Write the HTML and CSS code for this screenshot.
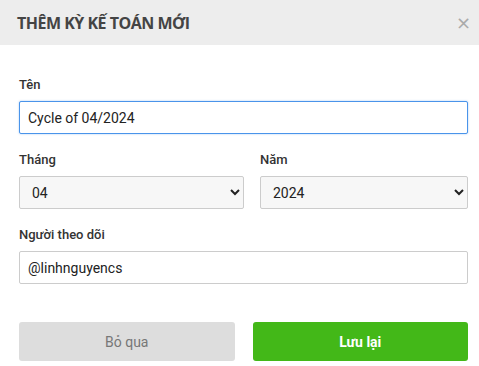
FILE: index.html
```html
<!doctype html>
<html>
<head>
<meta charset="utf-8">
<meta name="viewport" content="width=device-width, initial-scale=1.0">
<link rel="stylesheet" href="styles.css">
<title>Thêm kỳ kế toán mới</title>
</head>
<body>
<div class="modal">
  <div class="modal-header">
    <h1 class="modal-title">THÊM KỲ KẾ TOÁN MỚI</h1>
    <span class="modal-close">&times;</span>
  </div>

  <form class="modal-body">
    <div class="field">
      <label class="field-label">Tên</label>
      <input class="field-input is-focus" type="text" value="Cycle of 04/2024">
    </div>

    <div class="field-row">
      <div class="field">
        <label class="field-label">Tháng</label>
        <select class="field-select">
          <option>04</option>
        </select>
      </div>
      <div class="field">
        <label class="field-label">Năm</label>
        <select class="field-select">
          <option>2024</option>
        </select>
      </div>
    </div>

    <div class="field">
      <label class="field-label">Người theo dõi</label>
      <input class="field-input" type="text" value="@linhnguyencs">
    </div>

    <div class="actions">
      <button type="button" class="btn btn-cancel">Bỏ qua</button>
      <button type="button" class="btn btn-save">Lưu lại</button>
    </div>
  </form>
</div>
</body>
</html>
```

FILE: styles.css
```css
html,
body {
    margin: 0;
    padding: 0;
    background: #fff;
}
body {
    font-family: Roboto, "Liberation Sans", Arial, sans-serif;
    color: #333;
}
.modal {
    width: 479px;
}
.modal-header {
    height: 45px;
    background: #ededed;
    display: flex;
    align-items: center;
    justify-content: space-between;
    padding: 0 8px 0 17px;
    box-sizing: border-box;
}
.modal-title {
    margin: 0;
    font-family: "Open Sans", "Liberation Sans", sans-serif;
    font-size: 16px;
    font-weight: 700;
    color: #444;
    letter-spacing: -0.5px;
}
.modal-close {
    font-family: "DejaVu Sans", sans-serif;
    font-size: 18px;
    color: #aaa;
    line-height: 1;
}
.modal-body {
    padding: 30px 11px 0 19px;
}
.field {
    display: flex;
    flex-direction: column;
    min-width: 0;
    margin-bottom: 16px;
}
.field-label {
    font-size: 13px;
    font-weight: 500;
    line-height: 20px;
    color: #333;
    margin-bottom: 6px;
}
.field-input,
.field-select {
    width: 100%;
    height: 33px;
    box-sizing: border-box;
    border: 1px solid #ccc;
    border-radius: 2px;
    font-family: Roboto, "Liberation Sans", Arial, sans-serif;
    font-size: 14px;
    color: #222;
    padding: 0 8px;
    outline: none;
}
.field-input.is-focus {
    border-color: #4a94ea;
    box-shadow: 0 0 2px rgba(74, 148, 234, 0.5);
}
.field-select {
    background: #f7f7f7;
}
.field-row {
    display: grid;
    grid-template-columns: 225px 1fr;
    column-gap: 16px;
}
.actions {
    display: flex;
    gap: 18px;
    margin-top: 38px;
}
.btn {
    flex: 1;
    height: 39px;
    border: 0;
    border-radius: 3px;
    font-family: Roboto, "Liberation Sans", Arial, sans-serif;
    font-size: 14px;
}
.btn-cancel {
    background: #dddddd;
    color: #777;
}
.btn-save {
    background: #43b818;
    color: #fff;
    font-weight: 700;
}
```
